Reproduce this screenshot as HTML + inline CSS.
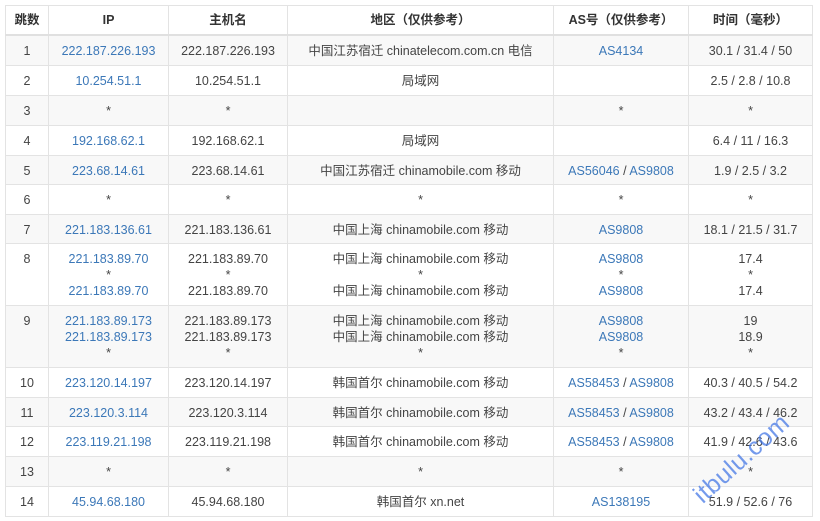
<!DOCTYPE html>
<html><head><meta charset="utf-8"><style>
html,body{margin:0;padding:0;background:#fff;width:820px;height:521px;overflow:hidden;position:relative}
table{position:absolute;left:5px;top:5px;border-collapse:collapse;table-layout:fixed;font-family:"Liberation Sans","Noto Sans CJK SC",sans-serif;font-size:12.5px;color:#444}
td,th{border:1px solid #e3e3e3;text-align:center;vertical-align:top;padding:7px 0 0 0;line-height:16px;box-sizing:border-box;white-space:nowrap}
th{font-weight:bold;height:29px;padding-top:6px;border-bottom:2px solid #e0e0e0;background:#fff;color:#333}
tr.g td{background:#f8f8f8}
a{color:#3c78b8;text-decoration:none}
.wm{position:absolute;left:688px;top:488px;transform:rotate(-42deg);transform-origin:left top;font-family:"Liberation Sans",sans-serif;font-size:25px;color:rgba(70,120,230,0.75);letter-spacing:0.5px}
</style></head><body>
<table>
<colgroup><col style="width:43px"><col style="width:120px"><col style="width:119px"><col style="width:266px"><col style="width:135px"><col style="width:124px"></colgroup>
<tr><th>跳数</th><th>IP</th><th>主机名</th><th>地区（仅供参考）</th><th>AS号（仅供参考）</th><th>时间（毫秒）</th></tr>
<tr class="g" style="height:31px"><td>1</td><td><a>222.187.226.193</a></td><td>222.187.226.193</td><td>中国江苏宿迁 chinatelecom.com.cn 电信</td><td><a>AS4134</a></td><td>30.1 / 31.4 / 50</td></tr>
<tr style="height:30px"><td>2</td><td><a>10.254.51.1</a></td><td>10.254.51.1</td><td>局域网</td><td></td><td>2.5 / 2.8 / 10.8</td></tr>
<tr class="g" style="height:30px"><td>3</td><td>*</td><td>*</td><td></td><td>*</td><td>*</td></tr>
<tr style="height:30px"><td>4</td><td><a>192.168.62.1</a></td><td>192.168.62.1</td><td>局域网</td><td></td><td>6.4 / 11 / 16.3</td></tr>
<tr class="g" style="height:29px"><td>5</td><td><a>223.68.14.61</a></td><td>223.68.14.61</td><td>中国江苏宿迁 chinamobile.com 移动</td><td><a>AS56046</a> / <a>AS9808</a></td><td>1.9 / 2.5 / 3.2</td></tr>
<tr style="height:30px"><td>6</td><td>*</td><td>*</td><td>*</td><td>*</td><td>*</td></tr>
<tr class="g" style="height:29px"><td>7</td><td><a>221.183.136.61</a></td><td>221.183.136.61</td><td>中国上海 chinamobile.com 移动</td><td><a>AS9808</a></td><td>18.1 / 21.5 / 31.7</td></tr>
<tr style="height:62px"><td>8</td><td><a>221.183.89.70</a><br>*<br><a>221.183.89.70</a></td><td>221.183.89.70<br>*<br>221.183.89.70</td><td>中国上海 chinamobile.com 移动<br>*<br>中国上海 chinamobile.com 移动</td><td><a>AS9808</a><br>*<br><a>AS9808</a></td><td>17.4<br>*<br>17.4</td></tr>
<tr class="g" style="height:62px"><td>9</td><td><a>221.183.89.173</a><br><a>221.183.89.173</a><br>*</td><td>221.183.89.173<br>221.183.89.173<br>*</td><td>中国上海 chinamobile.com 移动<br>中国上海 chinamobile.com 移动<br>*</td><td><a>AS9808</a><br><a>AS9808</a><br>*</td><td>19<br>18.9<br>*</td></tr>
<tr style="height:30px"><td>10</td><td><a>223.120.14.197</a></td><td>223.120.14.197</td><td>韩国首尔 chinamobile.com 移动</td><td><a>AS58453</a> / <a>AS9808</a></td><td>40.3 / 40.5 / 54.2</td></tr>
<tr class="g" style="height:29px"><td>11</td><td><a>223.120.3.114</a></td><td>223.120.3.114</td><td>韩国首尔 chinamobile.com 移动</td><td><a>AS58453</a> / <a>AS9808</a></td><td>43.2 / 43.4 / 46.2</td></tr>
<tr style="height:30px"><td>12</td><td><a>223.119.21.198</a></td><td>223.119.21.198</td><td>韩国首尔 chinamobile.com 移动</td><td><a>AS58453</a> / <a>AS9808</a></td><td>41.9 / 42.6 / 43.6</td></tr>
<tr class="g" style="height:30px"><td>13</td><td>*</td><td>*</td><td>*</td><td>*</td><td>*</td></tr>
<tr style="height:30px"><td>14</td><td><a>45.94.68.180</a></td><td>45.94.68.180</td><td>韩国首尔 xn.net</td><td><a>AS138195</a></td><td>51.9 / 52.6 / 76</td></tr>
</table>
<div class="wm">itbulu.com</div>
</body></html>
